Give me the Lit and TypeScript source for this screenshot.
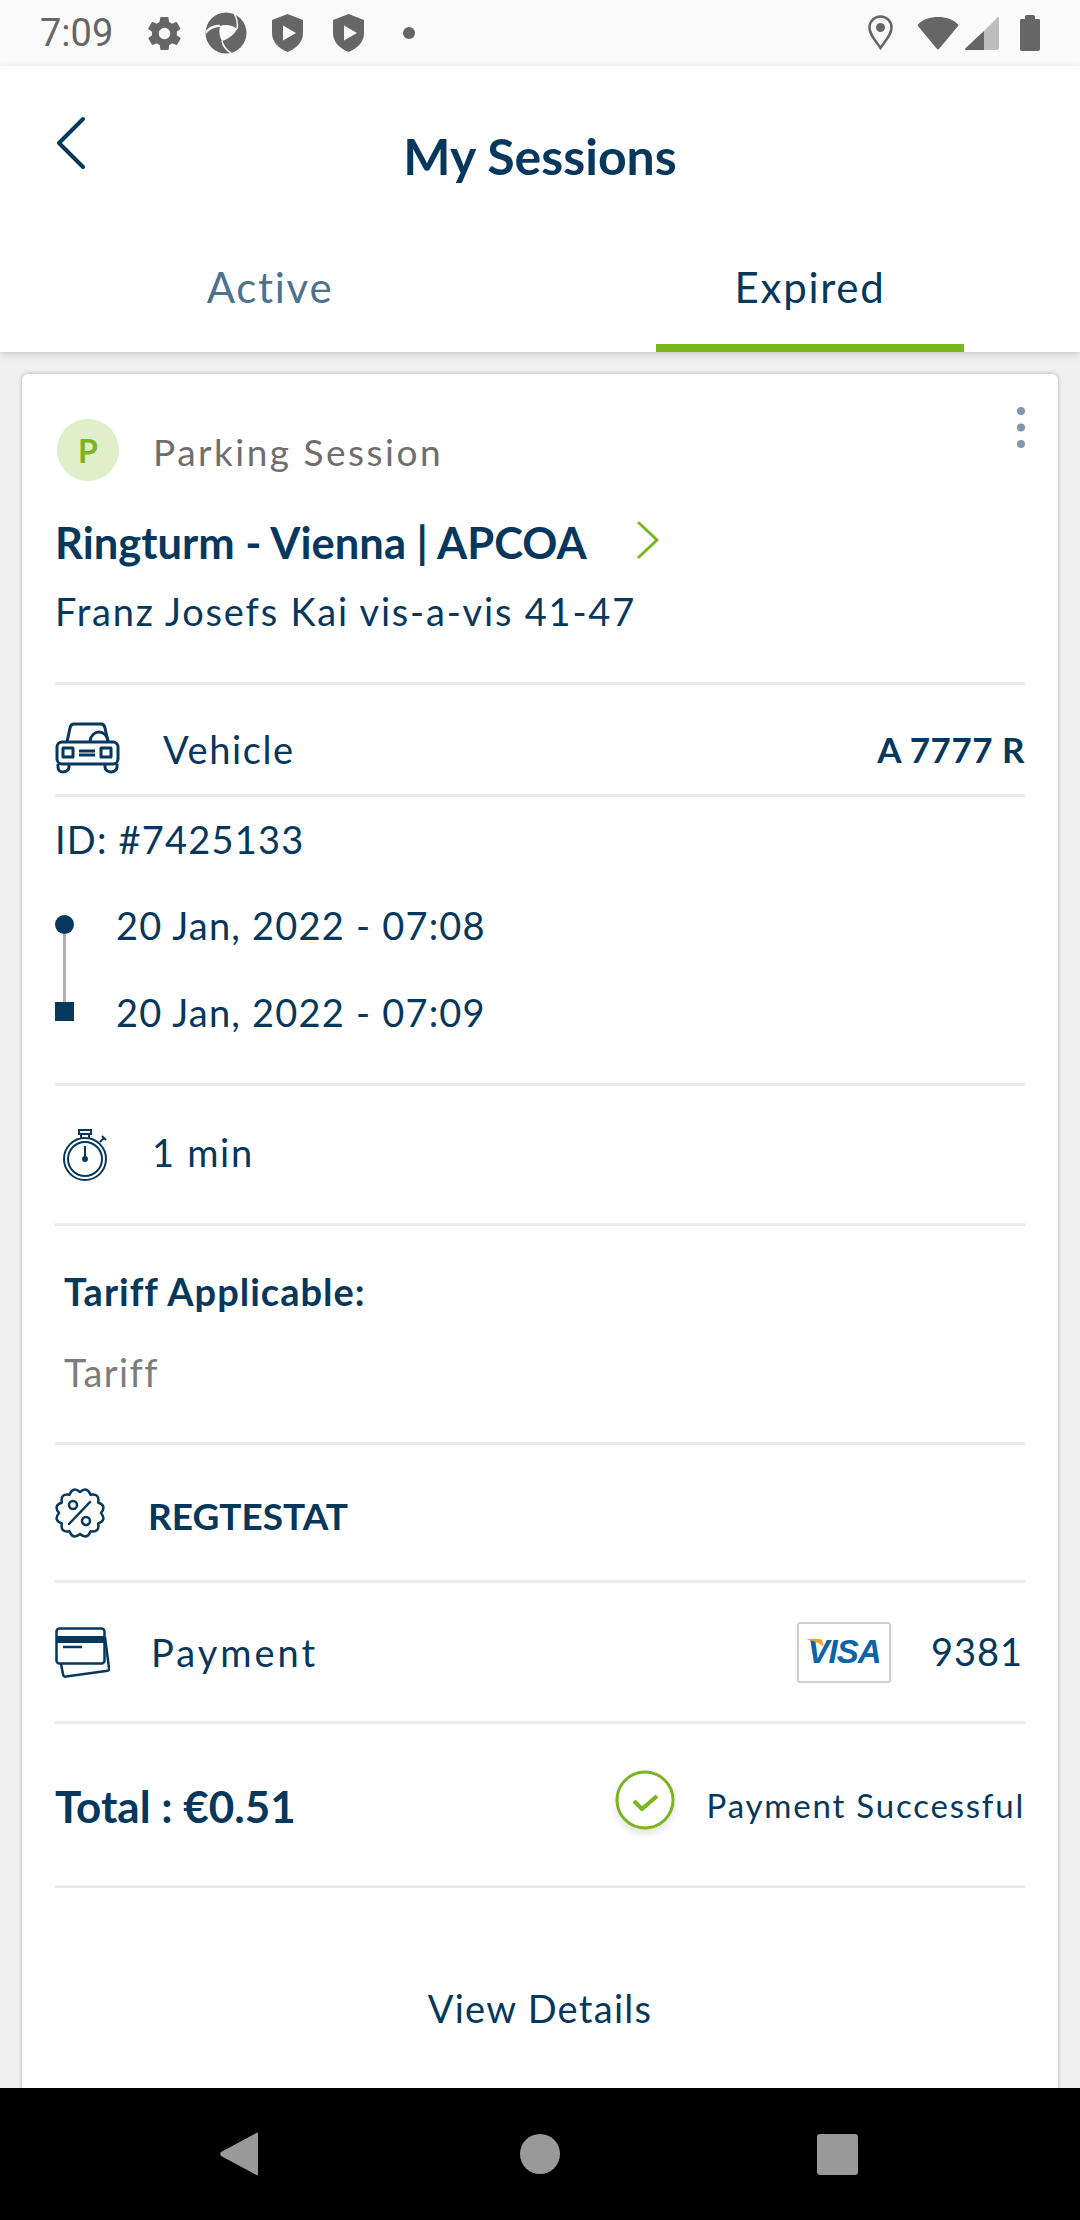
import { LitElement, html, css, svg } from 'lit';
import { customElement } from 'lit/decorators.js';

const shield = svg`<path fill="#666" d="M15.5 0 31 6v13c0 9-6.500 15.500-15.500 19C6.500 34.500 0 28 0 19V6z"/><path fill="#fafafa" d="M11 11.500 24 19l-13 7.500z"/>`;

// scalloped badge outline for the coupon icon
function badgePath(cx: number, cy: number, bumps: number) {
  const at = (r: number, a: number) =>
    `${(cx + r * Math.cos(a)).toFixed(1)} ${(cy + r * Math.sin(a)).toFixed(1)}`;
  const step = (Math.PI * 2) / bumps;
  let d = `M${at(21, -Math.PI / 2)}`;
  for (let i = 0; i < bumps; i++) {
    const a = -Math.PI / 2 + i * step;
    d += `Q${at(28, a + step / 2)} ${at(21, a + step)}`;
  }
  return d + 'z';
}

@customElement('app-root')
export class AppRoot extends LitElement {
  static styles = css`
    :host {
      display: block;
      font-family: 'Lato', 'Noto Sans', sans-serif;
      color: #06375c;
    }

    svg {
      display: block;
      flex: none;
    }

    .screen {
      display: flex;
      flex-direction: column;
      height: 2220px;
      overflow: hidden;
      background: #f0f0f0;
    }

    .status {
      display: flex;
      align-items: center;
      height: 66px;
      flex: none;
      padding: 0 40px;
      background: #fafafa;
      box-sizing: border-box;
    }

    .clock {
      width: 108px;
      font: 38px 'Roboto', sans-serif;
      color: #666;
    }

    .status-left {
      display: flex;
      align-items: center;
    }

    .status-right {
      display: flex;
      align-items: center;
      margin-left: auto;
    }

    .gear { margin-right: 24px; }
    .logo { margin-right: 25px; }
    .shield-a { margin-right: 30px; }
    .shield-b { margin-right: 39px; }
    .pin { margin-right: 24px; }
    .wifi { margin-right: 6px; }
    .signal { margin-right: 21px; }

    .header {
      position: relative;
      z-index: 1;
      flex: none;
      background: #fff;
      box-shadow: 0 2px 8px rgba(0, 0, 0, 0.18);
    }

    .title-row {
      display: flex;
      align-items: center;
      justify-content: center;
      position: relative;
      height: 182px;
      box-sizing: border-box;
    }

    .back {
      position: absolute;
      left: 56px;
      top: 50px;
    }

    .title {
      margin: 0 0 2px;
      font-size: 50px;
      font-weight: 700;
    }

    .tabs {
      display: grid;
      grid-template-columns: 1fr 1fr;
      height: 104px;
    }

    .tab {
      display: flex;
      justify-content: center;
      padding-top: 14px;
      font-size: 42px;
      letter-spacing: 1.7px;
      color: #4c7290;
      box-sizing: border-box;
    }

    .tab.on {
      color: #06375c;
      position: relative;
    }

    .tab.on::after {
      content: '';
      position: absolute;
      left: 116px;
      right: 116px;
      bottom: 0;
      height: 8px;
      background: #7ab51d;
    }

    .body {
      flex: 1;
      min-height: 0;
      padding: 22px 22px 0;
    }

    .card {
      position: relative;
      height: 1800px;
      padding: 0 33px;
      background: #fff;
      border-radius: 6px;
      box-shadow: 0 0 4px rgba(0, 0, 0, 0.28);
    }

    .section {
      display: flex;
      align-items: center;
      box-sizing: border-box;
      border-bottom: 3px solid #ebebeb;
    }

    .head {
      display: block;
      height: 311px;
      padding-top: 45px;
    }

    .type {
      display: flex;
      align-items: center;
      height: 62px;
      font-size: 37px;
      letter-spacing: 2.500px;
      color: #6e6e6e;
    }

    .type-icon {
      display: flex;
      align-items: center;
      justify-content: center;
      width: 62px;
      height: 62px;
      margin: 0 34px 0 2px;
      border-radius: 50%;
      background: #dfefc9;
      font-size: 32px;
      font-weight: 700;
      letter-spacing: 0;
      color: #7ab51d;
    }

    .type-text {
      padding-top: 2px;
    }

    .more {
      position: absolute;
      right: 32px;
      top: 32px;
    }

    .place {
      display: flex;
      align-items: center;
      gap: 50px;
      height: 50px;
      margin-top: 36px;
      font-size: 43.500px;
      font-weight: 700;
    }

    .place svg {
      margin-bottom: 4px;
    }

    .address {
      margin-top: 21px;
      font-size: 38px;
      letter-spacing: 1.800px;
    }

    .vehicle {
      height: 112px;
      padding-top: 18px;
      justify-content: space-between;
      font-size: 38px;
    }

    .row-label {
      display: flex;
      align-items: center;
      letter-spacing: 1.600px;
    }

    .car {
      margin: -2px 43px 0 0;
    }

    .plate {
      font-weight: 700;
      font-size: 35px;
      letter-spacing: 0.500px;
    }

    .trip {
      display: block;
      height: 289px;
      padding-top: 19px;
      font-size: 38px;
      letter-spacing: 1.200px;
    }

    .stops {
      display: grid;
      grid-template-columns: 61px 1fr;
      grid-auto-rows: 87px;
      margin-top: 19px;
      align-items: center;
    }

    .dot,
    .stop {
      display: block;
      width: 19px;
      height: 19px;
      background: #06375c;
      position: relative;
    }

    .dot {
      border-radius: 50%;
    }

    .dot::after {
      content: '';
      position: absolute;
      left: 8px;
      top: 19px;
      width: 3px;
      height: 69px;
      background: #b0b0b0;
    }

    .duration {
      height: 140px;
      padding-left: 8px;
      font-size: 38px;
      letter-spacing: 1.700px;
    }

    .watch {
      margin-right: 44px;
    }

    .watch-text {
      margin-bottom: 5px;
    }

    .tariff {
      display: block;
      height: 219px;
      padding: 42px 0 0 9px;
    }

    .tariff-title {
      font-size: 38px;
      font-weight: 700;
      letter-spacing: 1px;
    }

    .tariff-name {
      margin-top: 35px;
      font-size: 38px;
      letter-spacing: 1.400px;
      color: #7c7c7c;
    }

    .coupon {
      height: 138px;
      font-size: 37px;
      font-weight: 700;
    }

    .coupon-text {
      padding-top: 6px;
    }

    .badge {
      margin-right: 43px;
    }

    .payment {
      height: 141px;
      font-size: 38px;
    }

    .cards {
      margin-right: 41px;
    }

    .payment-label {
      letter-spacing: 3px;
    }

    .visa {
      display: flex;
      align-items: center;
      justify-content: center;
      position: relative;
      width: 94px;
      height: 61px;
      box-sizing: border-box;
      border: 2px solid #cfcfcf;
      border-radius: 3px;
      margin: 0 40px 0 auto;
      font: italic 700 33px 'Liberation Sans', sans-serif;
      color: #0b64a8;
      letter-spacing: -1px;
    }

    .visa svg {
      position: absolute;
      left: 7px;
      top: 15px;
    }

    .last4 {
      width: 94px;
      padding-bottom: 3px;
      font-size: 38px;
      letter-spacing: 1px;
    }

    .total {
      height: 164px;
      justify-content: space-between;
    }

    .amount {
      font-size: 44px;
      font-weight: 700;
      padding-top: 2px;
    }

    .paid {
      display: flex;
      align-items: center;
      font-size: 33px;
      letter-spacing: 1.800px;
    }

    .check {
      margin: -10px 32px 0 0;
      filter: drop-shadow(0 4px 4px rgba(0, 0, 0, 0.12));
    }

    .details {
      display: flex;
      justify-content: center;
      padding-top: 97px;
      font-size: 38px;
      letter-spacing: 1.300px;
    }

    .nav {
      display: flex;
      align-items: center;
      position: relative;
      z-index: 2;
      flex: none;
      height: 132px;
      padding-left: 220px;
      background: #000;
    }

    .nav-home {
      margin-left: 262px;
    }

    .nav-recent {
      margin-left: 257px;
    }
  `;

  render() {
    return html`
      <div class="screen">
        <div class="status">
          <div class="status-left">
            <span class="clock">7:09</span>
            <svg class="gear" width="33" height="35" viewBox="2 2 20 20">
              <path fill="#666" fill-rule="evenodd" d="M19.400 13c.1-.3.100-.7.100-1s0-.7-.1-1l2.100-1.600c.2-.2.200-.4.100-.6l-2-3.500c-.1-.2-.4-.3-.6-.2l-2.500 1c-.5-.4-1.100-.7-1.700-1l-.4-2.600c0-.3-.2-.5-.5-.5h-4c-.3 0-.5.200-.5.400l-.4 2.700c-.6.300-1.200.6-1.700 1l-2.500-1c-.2-.1-.5 0-.6.200l-2 3.500c-.1.200-.1.400.1.600L4.500 11c0 .3-.1.700-.1 1s0 .7.100 1l-2.100 1.600c-.2.200-.2.400-.1.600l2 3.500c.1.200.4.300.6.200l2.500-1c.5.400 1.100.7 1.700 1l.4 2.600c0 .3.200.5.500.5h4c.3 0 .5-.2.500-.4l.4-2.700c.6-.3 1.200-.6 1.700-1l2.500 1c.2.100.5 0 .6-.2l2-3.500c.1-.2.100-.4-.1-.6zM12 15.500a3.500 3.500 0 1 1 0-7 3.500 3.500 0 0 1 0 7z"/>
            </svg>
            <svg class="logo" width="42" height="42" viewBox="0 0 42 42">
              <circle cx="21" cy="21" r="20.500" fill="#666"/>
              <path fill="#fafafa" d="M15 14C20 12 28 13 32 17 29 23 23 27 17 29 14 24 14 18 15 14zM.5 19C5 14 10 12 15 13v2C10 15 5 17 1 22z"/>
              <path fill="none" stroke="#fafafa" stroke-width="1.500" d="M29 1c3 5 4 10 3 16M17 29c1 5 4 9 9 12"/>
            </svg>
            <svg class="shield-a" width="31" height="38" viewBox="0 0 31 38">${shield}</svg>
            <svg class="shield-b" width="31" height="38" viewBox="0 0 31 38">${shield}</svg>
            <svg width="12" height="12" viewBox="0 0 12 12"><circle cx="6" cy="6" r="6" fill="#666"/></svg>
          </div>
          <div class="status-right">
            <svg class="pin" width="25" height="36" viewBox="0 0 25 36">
              <path fill="none" stroke="#666" stroke-width="2.500" d="M12.500 33C7 25 1.500 19.500 1.500 12.500a11 11 0 0 1 22 0C23.500 19.500 18 25 12.500 33z"/>
              <circle cx="12.500" cy="12.500" r="4.500" fill="#666"/>
            </svg>
            <svg class="wifi" width="42" height="34" viewBox="0 0 42 34">
              <path fill="#666" d="M1 8.500C6 3 13 1 21 1s15 2 20 7.500c.5.500.5 1 .1 1.500L22 33c-.5.600-1.500.600-2 0L.9 10c-.4-.5-.4-1 .1-1.500z"/>
            </svg>
            <svg class="signal" width="34" height="34" viewBox="0 0 34 34">
              <path fill="#bdbdbd" d="M33 1c.5-.5 1-.2 1 .5V32c0 1-.6 2-2 2H19V15z"/>
              <path fill="#666" d="M19 15v19H1c-1 0-1.300-1-.6-1.700z"/>
            </svg>
            <svg width="20" height="36" viewBox="0 0 20 36">
              <path fill="#666" d="M5 2c0-1 .5-2 1.500-2h7C14.500 0 15 1 15 2v2h3.500c1 0 1.500.7 1.500 1.500V34c0 1-.7 2-2 2H2c-1.300 0-2-1-2-2V5.500C0 4.700.5 4 1.500 4H5z"/>
            </svg>
          </div>
        </div>

        <div class="header">
          <div class="title-row">
            <svg class="back" width="30" height="54" viewBox="0 0 30 54">
              <path fill="none" stroke="#06375c" stroke-width="4" stroke-linecap="round" stroke-linejoin="round" d="M27 3 3 27l24 24"/>
            </svg>
            <h1 class="title">My Sessions</h1>
          </div>
          <div class="tabs">
            <div class="tab">Active</div>
            <div class="tab on">Expired</div>
          </div>
        </div>

        <div class="body">
          <div class="card">
            <svg class="more" width="10" height="44" viewBox="0 0 10 44">
              <circle cx="5" cy="5" r="4" fill="#7b9ab2"/>
              <circle cx="5" cy="21.500" r="4" fill="#7b9ab2"/>
              <circle cx="5" cy="38" r="4" fill="#7b9ab2"/>
            </svg>

            <div class="section head">
              <div class="type">
                <span class="type-icon">P</span>
                <span class="type-text">Parking Session</span>
              </div>
              <div class="place">
                <span>Ringturm - Vienna | APCOA</span>
                <svg width="22" height="38" viewBox="0 0 22 38">
                  <path fill="none" stroke="#7ab51d" stroke-width="3" stroke-linecap="round" stroke-linejoin="round" d="M2 2l18 17L2 36"/>
                </svg>
              </div>
              <div class="address">Franz Josefs Kai vis-a-vis 41-47</div>
            </div>

            <div class="section vehicle">
              <div class="row-label">
                <svg class="car" width="65" height="52" viewBox="0 0 65 52">
                  <g fill="none" stroke="#06375c" stroke-width="3" stroke-linejoin="round">
                    <path d="M12 20 15 6c.5-2.500 2-4 4-4h27c2 0 3.500 1.500 4 4l3 14"/>
                    <rect x="2" y="20" width="61" height="22" rx="5"/>
                    <path d="M35 19c1-6 5-9 9-9s8 3 9 9"/>
                    <path d="M3 42v3c0 3 2 5 5 5s6-2 6-5v-3M50 42v3c0 3 3 5 6 5s6-2 6-5v-3"/>
                    <rect x="8" y="26" width="10" height="9"/>
                    <rect x="46" y="26" width="10" height="9"/>
                    <path d="M24 29h16M24 33h16"/>
                  </g>
                </svg>
                <span>Vehicle</span>
              </div>
              <span class="plate">A 7777 R</span>
            </div>

            <div class="section trip">
              <div>ID: #7425133</div>
              <div class="stops">
                <span class="dot"></span>
                <span>20 Jan, 2022 - 07:08</span>
                <span class="stop"></span>
                <span>20 Jan, 2022 - 07:09</span>
              </div>
            </div>

            <div class="section duration">
              <svg class="watch" width="45" height="54" viewBox="0 0 45 54">
                <g fill="none" stroke="#06375c" stroke-width="2">
                  <circle cx="22" cy="31" r="21"/>
                  <circle cx="22" cy="31" r="17"/>
                  <path d="M18 10V6h8v4M16 2h12v4H16zM37 14l4-4M39 8l4 4M22 18v15"/>
                  <circle cx="22" cy="31" r="2"/>
                </g>
              </svg>
              <span class="watch-text">1 min</span>
            </div>

            <div class="section tariff">
              <div class="tariff-title">Tariff Applicable:</div>
              <div class="tariff-name">Tariff</div>
            </div>

            <div class="section coupon">
              <svg class="badge" width="50" height="52" viewBox="0 0 50 52">
                <g fill="none" stroke="#06375c" stroke-width="2.500" stroke-linejoin="round">
                  <path d=${badgePath(25, 26, 12)}/>
                  <circle cx="18" cy="18" r="4"/>
                  <circle cx="31" cy="34" r="4"/>
                  <path d="M14 37 35 15" stroke-linecap="round"/>
                </g>
              </svg>
              <span class="coupon-text">REGTESTAT</span>
            </div>

            <div class="section payment">
              <svg class="cards" width="55" height="51" viewBox="0 0 55 51">
                <g fill="none" stroke="#06375c" stroke-width="2.500" stroke-linejoin="round">
                  <rect x="1.500" y="1.500" width="48" height="35" rx="3"/>
                  <path d="M6 37l2 10c.3 2 1 3 3 2.500l40-5.500c3-.5 3.500-1 3-3L50 10"/>
                  <path d="M8 20h19"/>
                </g>
                <rect x="1" y="9" width="49" height="7" fill="#06375c"/>
              </svg>
              <span class="payment-label">Payment</span>
              <div class="visa">
                <svg width="17" height="12" viewBox="0 0 17 12"><path fill="#f5a623" d="M0 0h13c2 0 3 1 3.500 3l1 5C14 4 8 2 0 0z"/></svg>
                VISA
              </div>
              <span class="last4">9381</span>
            </div>

            <div class="section total">
              <span class="amount">Total : €0.51</span>
              <div class="paid">
                <svg class="check" width="60" height="60" viewBox="0 0 60 60">
                  <circle cx="30" cy="30" r="28" fill="#fff" stroke="#7ab51d" stroke-width="3"/>
                  <path fill="none" stroke="#7ab51d" stroke-width="4" stroke-linejoin="round" d="M19 31l8 8 15-13"/>
                </svg>
                <span>Payment Successful</span>
              </div>
            </div>

            <div class="details">View Details</div>
          </div>
        </div>

        <div class="nav">
          <svg width="38" height="44" viewBox="0 0 38 44"><path fill="#999" d="M36.500 1c1-.8 1.500-.3 1.500 1v40c0 1.300-.6 1.800-1.500 1L1 24c-1-1-1-3 0-4z"/></svg>
          <svg class="nav-home" width="40" height="40" viewBox="0 0 40 40"><circle cx="20" cy="20" r="20" fill="#999"/></svg>
          <svg class="nav-recent" width="41" height="41" viewBox="0 0 41 41"><rect width="41" height="41" rx="3" fill="#999"/></svg>
        </div>
      </div>
    `;
  }
}
